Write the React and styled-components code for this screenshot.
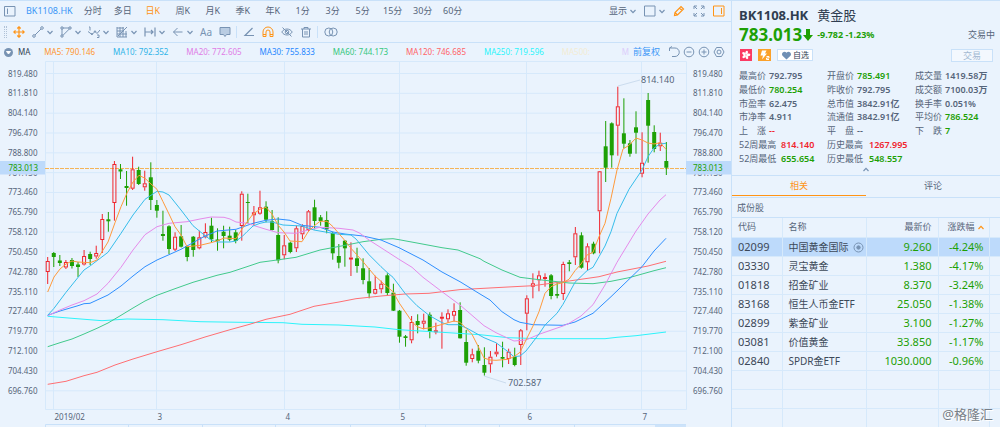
import React from "react";
import styled, { createGlobalStyle, ThemeProvider } from "styled-components";

const theme = {
  bg: "#eaf3fd",
  line: "#c9e1f9",
  grid: "#d6e9fb",
  text: "#56657a",
  dark: "#2f3d50",
  icon: "#7893b3",
  green: "#1da005",
  red: "#f0252d",
  orange: "#ff9416",
  blue: "#3b97f7",
  mark: "#bddafb",
};

const Global = createGlobalStyle`
  * { box-sizing: border-box; }
  body {
    margin: 0;
    background: ${theme.bg};
    color: ${theme.text};
    font: 9px/14px "Noto Sans", "Noto Sans CJK SC", sans-serif;
  }
  button {
    font: inherit;
    color: inherit;
    background: none;
    border: 0;
    padding: 0;
    cursor: pointer;
  }
`;

const Page = styled.div`
  position: relative;
  display: flex;
  min-height: 100vh;
  overflow: hidden;
  border-top: 1px solid ${(p) => p.theme.line};
`;

const Main = styled.main`
  flex: 1;
  min-width: 0;
  display: flex;
  flex-direction: column;
`;

const Side = styled.aside`
  width: 269px;
  flex: none;
  border-left: 1px solid ${(p) => p.theme.line};
`;

const Bar = styled.div`
  display: flex;
  align-items: center;
  height: ${(p) => p.$height}px;
  padding: 0 6px 0 4px;
  border-bottom: ${(p) => (p.$line ? 1 : 0)}px solid ${(p) => p.theme.line};
`;

const Periods = styled.nav`
  display: flex;
  flex: 1;
`;

const Period = styled.button`
  width: 30px;
  color: ${(p) => (p.$active ? p.theme.orange : p.theme.text)};
`;

const TickerButton = styled.button`
  color: ${(p) => p.theme.blue};
  margin: 0 5px 0 10px;
`;

const Actions = styled.div`
  display: flex;
  align-items: center;
  gap: ${(p) => p.$gap}px;
`;

const IconButton = styled.button`
  display: flex;
  align-items: center;
  gap: 3px;
  color: ${(p) => (p.$hot ? p.theme.orange : p.theme.icon)};
`;

const ButtonText = styled.span`
  color: ${(p) => p.theme.text};
`;

const Tools = styled.div`
  display: flex;
  align-items: center;
  gap: ${(p) => p.$gap}px;
  padding: 0 5px 0 6px;
  & + & {
    border-left: 1px solid ${(p) => p.theme.line};
  }
`;

const Grip = styled.span`
  width: 3px;
  height: 12px;
  border-left: 1px dotted ${(p) => p.theme.icon};
  border-right: 1px dotted ${(p) => p.theme.icon};
  opacity: 0.5;
`;

const FontTool = styled.span`
  font-size: 10px;
  width: 12px;
`;

const Legend = styled.div`
  display: flex;
  flex: 1;
  gap: 18px;
  min-width: 0;
  overflow: hidden;
  white-space: nowrap;
  font-size: 8px;
  padding-left: 5px;
`;

const LegendItem = styled.span`
  color: ${(p) => p.$color};
  min-width: ${(p) => (p.$wide ? 42 : 0)}px;
  margin-right: ${(p) => (p.$lead ? -4 : 0)}px;
`;

const Adjust = styled.button`
  color: ${(p) => p.theme.blue};
  margin: 0 8px 0 4px;
`;

const ChartSvg = styled.svg`
  display: block;
  width: 100%;
  height: auto;
  font-family: "Noto Sans", sans-serif;
`;

const Quote = styled.section`
  padding: 5px 7px 0;
  height: 175px;
  border-bottom: 1px solid ${(p) => p.theme.line};
`;

const TitleRow = styled.h1`
  display: flex;
  gap: 9px;
  margin: 0;
  font-size: 13px;
  line-height: 19px;
  color: ${(p) => p.theme.dark};
`;

const StockName = styled.span`
  font-weight: 400;
`;

const PriceRow = styled.div`
  display: flex;
  align-items: center;
  height: 20px;
  color: ${(p) => p.theme.green};
  font-weight: 700;
`;

const Price = styled.span`
  font-size: 17px;
  line-height: 20px;
`;

const Change = styled.span`
  flex: 1;
  padding-left: 4px;
`;

const Status = styled.span`
  color: ${(p) => p.theme.text};
  font-weight: 400;
  margin-right: -2px;
`;

const BadgeRow = styled.div`
  display: flex;
  align-items: center;
  height: 20px;
  gap: 6px;
`;

const Watch = styled.button`
  display: flex;
  align-items: center;
  gap: 1px;
  height: 12px;
  padding: 0 3px;
  border: 1px solid ${(p) => p.theme.line};
  background: #fff;
  color: ${(p) => p.theme.dark};
  font-size: 8px;
  line-height: 10px;
`;

const Trade = styled.button`
  width: 42px;
  height: 13px;
  margin-left: auto;
  line-height: 11px;
  border: 1px solid ${(p) => p.theme.line};
  background: #f3f8fe;
  color: #a3b8d2;
`;

const Stats = styled.dl`
  display: grid;
  grid-template-columns: 88px 88px 1fr;
  grid-template-rows: repeat(7, 1fr);
  height: 96px;
  margin: 4px -7px 0 0;
  line-height: 13px;
`;

const Stat = styled.div`
  display: flex;
  align-items: center;
  gap: 3px;
  white-space: nowrap;
  grid-column: ${(p) => p.$column};
`;

const StatLabel = styled.dt`
  min-width: ${(p) => (p.$long ? 39 : 27)}px;
`;

const StatValue = styled.dd`
  margin: 0;
  font-weight: 600;
  color: ${(p) => p.theme[p.$tone] || p.theme.text};
`;

const Collapse = styled.button`
  display: block;
  margin: 0 auto;
  height: 9px;
  line-height: 0;
  color: ${(p) => p.theme.icon};
`;

const Tabs = styled.div`
  display: flex;
  height: 22px;
  border-bottom: 1px solid ${(p) => p.theme.line};
`;

const Tab = styled.button`
  flex: 1;
  height: 20px;
  color: ${(p) => (p.$active ? p.theme.orange : p.theme.text)};
  border-bottom: 1px solid ${(p) => (p.$active ? p.theme.orange : "transparent")};
`;

const Section = styled.h2`
  margin: 0;
  padding-left: 5px;
  height: 20px;
  font-size: 9px;
  line-height: 19px;
  font-weight: 400;
  border-bottom: 1px solid ${(p) => p.theme.line};
`;

const Table = styled.table`
  width: 100%;
  table-layout: fixed;
  border-collapse: collapse;
`;

const Row = styled.tr`
  height: 19px;
  background: ${(p) => (p.$selected ? p.theme.mark : "transparent")};
`;

const Cell = styled.td`
  padding: 0 6px;
  font-size: ${(p) => (p.$name ? 10 : 11)}px;
  line-height: 18px;
  white-space: nowrap;
  text-align: ${(p) => (p.$num ? "right" : "left")};
  color: ${(p) => (p.$num ? p.theme.green : "#3c4858")};
  border-right: 1px solid ${(p) => p.theme.grid};
  border-bottom: 1px solid ${(p) => p.theme.grid};
  &:nth-child(4) {
    padding: 0 5px 0 0;
  }
  &:last-child {
    border-right: 0;
  }
  svg {
    vertical-align: -2px;
    margin-left: 4px;
    color: ${(p) => p.theme.icon};
  }
`;

const Head = styled(Cell)`
  font-size: 9px;
  font-weight: 400;
  color: ${(p) => p.theme.text};
  svg {
    margin-left: 3px;
    vertical-align: 0;
    color: ${(p) => p.theme.orange};
  }
`;

const Watermark = styled.div`
  position: absolute;
  right: 7px;
  bottom: 4px;
  font-size: 13px;
  line-height: 20px;
  color: #777f88;
  text-shadow: 0 0 1px #fff, 1px 1px 0 #fff;
`;

const Icon = ({ w = 12, h = 12, children, sw = 1 }) => (
  <svg
    width={w}
    height={h}
    viewBox={`0 0 ${w} ${h}`}
    fill="none"
    stroke="currentColor"
    strokeWidth={sw}
    aria-hidden="true"
  >
    {children}
  </svg>
);

const Chevron = ({ up }) => (
  <Icon w={6} h={5} sw={1.2}>
    <path d={up ? "M.5 4 3 1.3 5.5 4" : "M.5 1 3 3.7 5.5 1"} />
  </Icon>
);

const dropTools = [
  ["line", <><path d="M3 9 9 3" /><circle cx="2" cy="10" r="1.3" /><circle cx="10" cy="2" r="1.3" /></>],
  ["shape", <><path d="M2 3v6M3 2h6M3 9.3 9.3 3" /><path d="M1 1h2v2H1zM9 1h2v2H9zM1 9h2v2H1z" /></>],
  ["wave", <><path d="M1 1h1v3.500M0 5.500l4 3 3-3 2 2 3-3.500M9 9h2v2.500H9" /><circle cx="4" cy="8" r=".7" /><circle cx="7" cy="5.500" r=".7" /></>],
  ["grid", <><path d="M1 1v10h10M1 2h7M1 5h7M1 8h10M4 1v10M7 1v10M10 5v6M2 10 11 1" /></>],
  ["measure", <><path d="M1 1.500v9M11 1.500v9M1 6h8M7 4l2 2-2 2" strokeWidth="1.2" /></>],
  ["arrow", <><path d="M10.500 6H1.500M5.500 2 1.500 6l4 4" /></>],
];

const periods = ["分时", "多日", "日K", "周K", "月K", "季K", "年K", "1分", "3分", "5分", "15分", "30分", "60分"];

const legend = [
  ["MA5: 790.146", "#ff962e"],
  ["MA10: 792.352", "#2fb4e8"],
  ["MA20: 772.605", "#e07de6"],
  ["MA30: 755.833", "#1f87ff"],
  ["MA60: 744.173", "#35c77e"],
  ["MA120: 746.685", "#ff6469"],
  ["MA250: 719.596", "#2cf3fb"],
  ["MA500:", "#f3ecd4"],
  ["M", "#dccdfb"],
];

const ticks = [
  "819.480", "811.810", "804.140", "796.470", "788.800", "781.130", "773.460", "765.790", "758.120",
  "750.450", "742.780", "735.110", "727.440", "719.770", "712.100", "704.430", "696.760",
];

const months = [[53.5, "2019/02"], [156.5, "3"], [284.5, "4"], [399.5, "5"], [526.5, "6"], [641.5, "7"]];

// Each session: direction, high, body top, body bottom, low (chart units)
const candles = `r257 261 272 284|g252 253 257 267|g255 260.5 263 266|r260 262 267.5 269|g258 260 266 268.5|g262 264.5 267 277
r250 256 264.5 265.5|g251.7 254 259 265|r245.7 253 256.5 258.7|r214 219 240 253|g212 219.3 221.3 231.7|r161 164 203 220.7
g164 169.3 171.5 179|g171 186 188 205.7|r156.7 169.3 188.7 190|g166.7 170 184 185|r170.7 183.3 187.3 190.7|g162.3 177.3 200 210
g200 205 210.7 217.7|g210.7 234 236 240.7|g225.3 226.3 249 254|r232.3 236.7 249.7 251|g225 236.3 246.7 247.5|g245.7 246 257 261.3
g236 236.7 250 256.7|r230.7 237.3 248.3 249.3|r223.3 232 237.3 238.3|g217.7 225.7 239.3 242|g228.3 239.5 241 250.7|g225.7 231.7 236 248.3
g226.7 235.7 239.7 241.3|g230 232.3 241 243.3|r191.3 193.7 226 240.7|g193.7 202 203 223.3|r206 212.3 215.3 225|r190.7 207.3 213.7 214.7
g201.3 206.7 219.7 222.3|g210 221.3 230 230.5|g217.3 235 260.3 263.3|r235 245.3 255.3 259.3|g241.7 242.7 252 253.3|r225.7 228.3 248.3 252
r224.3 226 234.3 239.3|r210 211.3 230 231.7|g199.7 207.3 221 229.3|g215 217.3 221 225.7|g211.3 220 229.3 233.3|g231.7 233 253.3 259.7
g244 256 262.7 268.3|g240 240.7 248.3 266.7|r242.3 257.5 259 276|g247.7 258.3 266 272.7|g258.3 268.3 280 284.3|g268 281.3 293.3 298.3
r275.7 289 293.7 294.3|r280.7 283.7 289.3 293.3|g273.3 275.3 293 295|g283.7 292.7 310.7 311|g310 310.7 336.7 342.7|g335 336.3 338 346.7
r316 322 340.3 343.3|g314.3 321 325 333.3|r313.7 320.7 323.7 329.3|g312.3 314.7 331.7 338.3|r322.7 330.3 331.7 334.3|r312.3 316.7 318 348.7
r309.3 313.3 319.3 322.7|r303.3 311 315.7 321.7|g302.3 310 338.3 338.5|g330 342 362.7 365.7|r348.7 354.3 359 362.3|g345 350.7 360.7 363.3
g347.3 365 372.7 375.7|r351 356.7 364.3 372.7|r343.3 351.7 354.3 356.7|g341.7 357 358.7 367.3|r348.7 351.7 359 364|g347.7 356.7 365 366.3
r329 330.3 345 365|r295.3 298.3 313.7 330.3|r273.3 283.3 286.7 298.3|r270.7 275.3 280.3 291.3|r273.3 277 279 286.7|g274 275.3 296 299.3
g282 294 295.7 298.3|r261.7 264 294 300|g260 262.3 264 271.3|r227 233.3 257.3 265|g232.3 235.3 267.7 268.7|r243.3 246.3 262.3 270
g241.7 243.7 253.3 254.3|r171 171.3 211.3 253.3|g121 146.3 167.7 182|g122.3 123.3 155.3 167.7|r86.7 106.3 125.7 155.7|g98.3 133.3 143.7 148.3
g140 143.3 153.7 156.7|g111.3 127.3 132.7 153.7|r132.3 162.7 173.7 177.3|g93 100 125.7 162.7|g125.3 132 149 152.3|r132.7 142.7 146.3 151|g142 161 167.7 175`
  .split(/[|\n]/)
  .map((s) => [s[0], ...s.slice(1).split(" ").map(Number)]);

const averages = [
  ["#2cf3fb", "47.7,316.3 72,318.3 102,320.7 127,319 163,319.7 200,321.7 240,322.3 283,322.7 302,324.3 339,325 375,327 399,329.7 442,332.3 480,334.7 508,337.7 539,338.7 605,338.7 617,337.3 636,335.7 666,332"],
  ["#ff6f73", "47.7,384.3 66,381.3 84,375.7 97,372.3 115,365 133,359 157,351.7 181,344.7 205,337 230,329.7 250,324.2 266,319.3 290,314.3 314,306.3 339,302 356,298.7 381,296 405,294 429,293.3 460,289.6 484,288.3 508,287 533,285.7 551,283.3 569,281 599,276.7 617,272 648,266 666,261.3"],
  ["#42ca8c", "47.7,346.7 60,342.7 72,339 84,334 97,328.3 108,323 121,315.3 133,308 145,301 157,295.3 175,288.7 193,282.3 217,275.3 230,272.3 247,266.7 260,262.3 272,260.7 296,257.3 320,250 345,245.3 363,241.7 381,239.3 393,238.7 399,239.7 417,243 442,247.7 458,250 480,258.7 484,261.3 502,270 520,277.3 539,279.7 569,283 593,283.7 611,281.3 629,277.7 654,270.7 666,267.7"],
  ["#2f8fff", "47.7,315.3 60,311 78,305.7 84,303.7 90,303.3 108,295 121,286 133,276 145,266.7 157,260 169,254.7 181,249.3 193,242.7 205,236 211,233.7 217,231 236,229.3 253,223.3 266,220.3 278,219 290,220.3 302,225.3 320,227.3 333,232 345,234 363,236 381,240 399,247.7 423,260 442,272 460,281.7 480,294 490,300 502,311.7 514,319.7 520,322.3 533,324.7 563,325.3 575,322 593,313.3 611,296.7 629,279.3 642,266.7 654,251 666,238.3"],
  ["#e58bea", "47.7,315.7 60,310 72,305 84,300.7 97,294 108,283.3 121,267.3 133,250 145,234.7 157,226.7 169,223.3 187,221.7 200,219 211,217 224,217.3 230,219 236,222 248,223.3 253,225.3 266,229.3 278,232.7 296,233.3 308,230 320,227.3 339,228.3 353,230 360,233.3 369,240 381,247.7 399,259.3 412,267.3 423,277.3 442,291.7 460,305 484,325.7 496,332.7 508,338.3 514,341 526,340 539,334.3 563,326 569,323.3 581,316 593,304.7 605,285 617,262.3 636,231 648,214 660,200 666,194.7"],
  ["#36bdeb", "47.7,315.3 54,308.3 66,292.3 84,270 90,266 108,252.3 121,233.3 133,215 145,199.3 157,191.3 163,192 169,195 181,210 193,225.7 205,235.7 211,240 217,242 230,242 236,241 242,236.7 247,231.7 253,226 260,223.3 266,222 272,222 283,225 302,226 314,230 327,232.3 339,234.3 351,235 356,239 369,254.7 381,266.7 387,272.3 393,277.3 405,293.3 417,305.7 429,315.3 442,322.7 448,324.7 458,324.7 466,327.7 484,337.7 496,342.7 508,351.7 514,356.7 520,356 526,351 539,334 545,325 557,313.3 563,304.3 575,282.3 587,270.7 593,267.3 599,256.7 605,246 611,231.7 617,213.3 629,189.3 642,170 648,156.7 654,148 660,144 666,143.3"],
  ["#ff9a3c", "47.7,292 54,277 60,269 66,264 72,261 78,262 90,262.7 97,260 102,251.7 108,242 115,222.7 121,206.7 127,193 133,182 139,175.3 145,178.3 151,184 157,189.3 163,201.7 169,214 175,226.7 181,235 187,246.7 200,245.3 211,242.7 217,241 224,238 236,238.7 242,229 247,222 253,214 260,209.3 266,207.3 272,214 278,225 284,232 290,241 302,241.7 308,232 314,226 320,221.3 327,221.3 333,226.7 345,240.7 351,248.3 363,261.7 375,276 387,286.7 393,291.7 399,302.7 412,321.7 417,326.7 423,328.7 429,328 440,325 454,321 460,322.3 466,328.3 472,334.3 480,350 484,358 490,360 496,360.3 508,359.3 514,356.7 520,352.3 526,340 533,326 539,311.7 545,293.3 551,286.7 557,284 563,282.7 569,279.3 575,270.7 581,264 587,255 593,252.3 599,236.7 605,223.3 611,198.3 617,170 623,149 629,145.3 636,138 642,140 648,143 654,144 660,142.7 666,149.3"],
];

function Chart() {
  const t = theme;
  return (
    <ChartSvg viewBox="0 61 731 366" role="img" aria-label="BK1108.HK 日K">
      <g stroke={t.grid}>
        <path d="M45.500 61.500H686.500V409.500H45.500Z" fill="none" />
        {ticks.map((v, i) => (
          <path key={v} d={`M45 ${73.5 + i * 19.83}H686`} />
        ))}
        {months.map(([x]) => (
          <path key={x} d={`M${x} 62V409`} />
        ))}
      </g>
      <g fontSize="8" fill={t.text}>
        {ticks.map((v, i) => (
          <React.Fragment key={v}>
            <text x="37.500" y={76.5 + i * 19.83} textAnchor="end">{v}</text>
            <text x="693" y={76.5 + i * 19.83}>{v}</text>
          </React.Fragment>
        ))}
        {months.map(([x, v]) => (
          <text key={v} x={x + 1} y="420">{v}</text>
        ))}
      </g>
      <path d="M45 168.500H686" stroke="#f5b458" strokeDasharray="4 1" />
      {candles.map(([c, hi, top, bottom, lo], i) => {
        const x = 47.7 + i * 6.065;
        return c === "g" ? (
          <g key={i} fill={t.green}>
            <rect x={x - 0.5} y={hi} width="1" height={lo - hi} />
            <rect x={x - 2} y={top} width="4" height={bottom - top} />
          </g>
        ) : (
          <g key={i} stroke={t.red} fill="none">
            <path d={`M${x} ${hi}V${top}M${x} ${bottom}V${lo}`} />
            <rect x={x - 1.5} y={top + 0.5} width="3" height={Math.max(bottom - top - 1, 1)} />
          </g>
        );
      })}
      {averages.map(([color, points]) => (
        <polyline key={color} points={points} fill="none" stroke={color} />
      ))}
      <path d="M618 86 640 80M484 376 506 383" stroke="#cbdcee" />
      <g fontSize="9" fill={t.text}>
        <text x="641" y="83">814.140</text>
        <text x="508" y="386">702.587</text>
      </g>
      <path d="M0 161H45V174.500H0ZM686 161H731V174.500H686Z" fill={t.mark} />
      <g fontSize="8" fill={t.green}>
        <text x="38" y="171" textAnchor="end">783.013</text>
        <text x="693" y="171">783.013</text>
      </g>
      <path d="M655 425H686V427H655Z" fill="#cde3fa" />
      <path d="M45.500 427V424.500H686M128.500 425V427M202.500 425V427M275.500 425V427M350.500 425V427M425.500 425V427M499.500 425V427M574.500 425V427" fill="none" stroke={t.line} />
    </ChartSvg>
  );
}

const stats = [
  ["最高价", "792.795"], ["开盘价", "785.491", "green"], ["成交量", "1419.58万"],
  ["最低价", "780.254", "green"], ["昨收价", "792.795"], ["成交额", "7100.03万"],
  ["市盈率", "62.475"], ["总市值", "3842.91亿"], ["换手率", "0.051%"],
  ["市净率", "4.911"], ["流通值", "3842.91亿"], ["平均价", "786.524", "green"],
  ["上　涨", "--", "red"], ["平　盘", "--"], ["下　跌", "7", "green"],
  ["52周最高", "814.140", "red", 1], ["历史最高", "1267.995", "red", 2],
  ["52周最低", "655.654", "green", 1], ["历史最低", "548.557", "green", 2],
];

const stocks = [
  ["02099", "中国黄金国际", "9.260", "-4.24%"],
  ["03330", "灵宝黄金", "1.380", "-4.17%"],
  ["01818", "招金矿业", "8.370", "-3.24%"],
  ["83168", "恒生人币金ETF", "25.050", "-1.38%"],
  ["02899", "紫金矿业", "3.100", "-1.27%"],
  ["03081", "价值黄金", "33.850", "-1.17%"],
  ["02840", "SPDR金ETF", "1030.000", "-0.96%"],
  [], [], [],
];

export default function App() {
  return (
    <ThemeProvider theme={theme}>
      <Global />
      <Page>
        <Main>
          <Bar $height={21} $line>
            <IconButton aria-label="侧栏">
              <Icon><path d="M.5 1.500h10.500v9.500H.5zM3.500 3.500v5.500" /></Icon>
            </IconButton>
            <TickerButton>BK1108.HK</TickerButton>
            <Periods>
              {periods.map((p) => (
                <Period key={p} $active={p === "日K"}>{p}</Period>
              ))}
            </Periods>
            <Actions $gap={8}>
              <IconButton>
                <ButtonText>显示</ButtonText>
                <Chevron />
              </IconButton>
              <IconButton aria-label="窗口">
                <Icon><path d="M.5 1h10.500v10H.5z" /></Icon>
                <Chevron />
              </IconButton>
              <IconButton aria-label="画线" $hot>
                <Icon><path d="m1.500 10.500.5-3L8 1.500l2.500 2.500-6 6zM6.500 3l2.500 2.500M2 7.500 4.500 10" strokeWidth="1.200" /></Icon>
              </IconButton>
              <IconButton aria-label="全屏">
                <Icon><path d="M1 4V1h3M1 1l3 3M8 1h3v3M11 1 8 4M1 8v3h3M1 11l3-3M8 11h3V8M11 11 8 8" /></Icon>
              </IconButton>
              <IconButton aria-label="右栏" $hot>
                <Icon><path d="M.5 1h10.500v10H.5zM8.500 3v6" /></Icon>
              </IconButton>
            </Actions>
          </Bar>
          <Bar $height={21} $line>
            <Grip />
            <Tools $gap={7}>
              <IconButton aria-label="移动" $hot>
                <Icon><path d="M6 1v10M1 6h10M4.300 2.500 6 .8l1.700 1.700M4.300 9.500 6 11.200l1.700-1.700M2.500 4.300.8 6l1.700 1.700M9.500 4.300 11.200 6 9.500 7.700" strokeWidth="1.200" /></Icon>
              </IconButton>
              {dropTools.map(([name, art]) => (
                <IconButton key={name} aria-label={name}>
                  <Icon>{art}</Icon>
                  <Chevron />
                </IconButton>
              ))}
              <IconButton><FontTool>Aa</FontTool></IconButton>
              <IconButton aria-label="批注">
                <Icon><path d="M1 1.500h10v7H7.500L6 10.500 4.500 8.500H1z" fill="#b9cce2" /></Icon>
              </IconButton>
            </Tools>
            <Tools $gap={7}>
              <IconButton aria-label="角度"><Icon><path d="M9.500 2 2 9.500h9" strokeWidth="1.200" /></Icon></IconButton>
              <IconButton aria-label="磁铁" $hot>
                <Icon><path d="M1 10.500V6a5 5 0 0 1 10 0v4.500H8V6a2 2 0 0 0-4 0v4.500zM1 8.500h3M8 8.500h3" /></Icon>
              </IconButton>
              <IconButton aria-label="隐藏">
                <Icon><path d="M.8 6C3 2 9 2 11.200 6 9 10 3 10 .8 6zM1.500 1.500l9 9" /><circle cx="6" cy="6" r="1.800" /></Icon>
              </IconButton>
              <IconButton aria-label="删除">
                <Icon><path d="M1 3h10M4 3V1.500h4V3M2.500 3v8h7V3M5 5v4M7 5v4" /></Icon>
              </IconButton>
            </Tools>
            <Tools>
              <IconButton aria-label="对比">
                <Icon w={14}><circle cx="4.800" cy="6" r="4" /><circle cx="9.200" cy="6" r="4" /></Icon>
              </IconButton>
            </Tools>
          </Bar>
          <Bar $height={18}>
            <IconButton aria-label="指标">
              <Icon w={9} h={9}><circle cx="4.500" cy="4.500" r="4.500" fill="currentColor" stroke="none" /><path d="M2.500 3.500h4l-2 2.500z" fill="#fff" stroke="#fff" /></Icon>
            </IconButton>
            <Legend>
              <LegendItem $color={theme.dark} $lead>MA</LegendItem>
              {legend.map(([text, color]) => (
                <LegendItem key={text} $color={color} $wide={text === "MA500:"}>{text}</LegendItem>
              ))}
            </Legend>
            <Adjust>前复权</Adjust>
            <Actions $gap={3}>
              <IconButton aria-label="撤销"><Icon><path d="M1.500 2H7a4.200 4.200 0 0 1 0 8.500H4M4 .5 1.500 2v3" /></Icon></IconButton>
              <IconButton aria-label="缩小"><Icon><circle cx="6" cy="6" r="4.800" /><path d="M3.500 6h5" /></Icon></IconButton>
              <IconButton aria-label="放大"><Icon><circle cx="6" cy="6" r="4.800" /><path d="M3.500 6h5M6 3.500v5" /></Icon></IconButton>
              <IconButton aria-label="设置"><Icon><path d="M3.500 1.500h5L11 6l-2.500 4.500h-5L1 6z" /><circle cx="6" cy="6" r="2" /></Icon></IconButton>
            </Actions>
          </Bar>
          <Chart />
        </Main>

        <Side>
          <Quote>
            <TitleRow>BK1108.HK <StockName>黄金股</StockName></TitleRow>
            <PriceRow>
              <Price>783.013</Price>
              <Icon w={11} h={14}><path d="M4 1h4v6h3l-5 6-5-6h3z" fill="currentColor" stroke="none" /></Icon>
              <Change>-9.782 -1.23%</Change>
              <Status>交易中</Status>
            </PriceRow>
            <BadgeRow>
              <Icon w={13} h={12}>
                <path d="M1 0h12v12H1z" fill="#fb3a63" stroke="none" />
                <g fill="#fff" stroke="none">
                  {[0, 72, 144, 216, 288].map((a) => (
                    <ellipse key={a} cx="7" cy="3.600" rx="1.300" ry="2" transform={`rotate(${a + 15} 7 6)`} />
                  ))}
                </g>
              </Icon>
              <Icon w={13} h={12}>
                <path d="M0 0h13v12H0z" fill="#fba12a" stroke="none" />
                <path d="M4 1.500h4.500L7 4.500h2L4 10.500l1-4H2.500z" fill="#fff" stroke="none" />
                <path d="M8.500 7.500h2.500v1.500H8.500v1.500h2.500" stroke="#fff" />
              </Icon>
              <Watch>
                <Icon w={11} h={9}><path d="M5.500 8.500 1.500 4.800C-.3 2.300 3.200-.7 5.500 1.800 7.800-.7 11.300 2.300 9.500 4.800z" fill="#6f8fb4" stroke="none" /></Icon>
                自选
              </Watch>
              <Trade>交易</Trade>
            </BadgeRow>
            <Stats>
              {stats.map(([label, value, tone, column]) => (
                <Stat key={label} $column={column || "auto"}>
                  <StatLabel $long={label.length > 3}>{label}</StatLabel>
                  <StatValue $tone={tone}>{value}</StatValue>
                </Stat>
              ))}
            </Stats>
            <Collapse aria-label="收起"><Chevron up /></Collapse>
          </Quote>
          <Tabs>
            <Tab $active>相关</Tab>
            <Tab>评论</Tab>
          </Tabs>
          <Section>成份股</Section>
          <Table>
            <colgroup>
              <col width="50" /><col width="84" /><col width="72" /><col width="51" /><col />
            </colgroup>
            <thead>
              <Row>
                <Head as="th">代码</Head>
                <Head as="th">名称</Head>
                <Head as="th" $num>最新价</Head>
                <Head as="th" $num>涨跌幅<Chevron up /></Head>
                <Head />
              </Row>
            </thead>
            <tbody>
              {stocks.map(([code, name, price, change], i) => (
                <Row key={i} $selected={i === 0}>
                  <Cell>{code}</Cell>
                  <Cell $name>
                    {name}
                    {i === 0 && (
                      <Icon w={11} h={11}><circle cx="5.500" cy="5.500" r="4.500" /><circle cx="5.500" cy="5.500" r="1.700" fill="currentColor" /></Icon>
                    )}
                  </Cell>
                  <Cell $num>{price}</Cell>
                  <Cell $num>{change}</Cell>
                  <Cell />
                </Row>
              ))}
            </tbody>
          </Table>
        </Side>
        <Watermark>@格隆汇</Watermark>
      </Page>
    </ThemeProvider>
  );
}
